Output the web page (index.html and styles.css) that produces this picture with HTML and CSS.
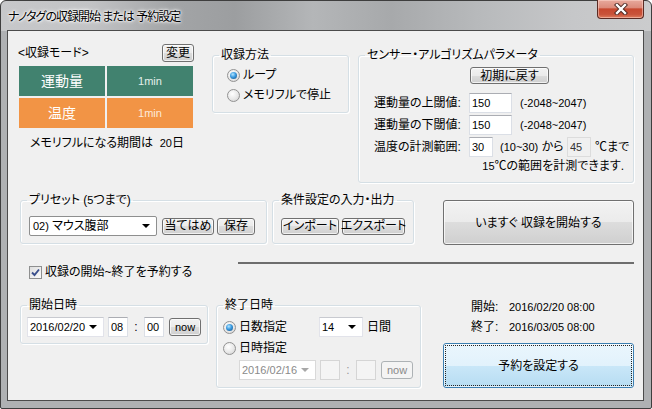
FILE: index.html
```html
<html>
  <head>
    <meta http-equiv="content-type" content="text/html;charset=UTF8">
    <link rel="stylesheet" href="styles.css">
    <title>ナノタグの収録開始 または 予約設定</title>
  </head>
  <body>
    <div class="window">
      <!-- title bar -->
      <div class="titlebar">
        <div class="title">ナノタグの収録開始 または 予約設定</div>
        <div class="close_btn">
          <svg width="14" height="12" viewBox="0 0 14 12">
            <path d="M3 2 L11 10 M11 2 L3 10" stroke="#4a2620" stroke-width="4.2" stroke-linecap="square" fill="none"/>
            <path d="M3 2 L11 10 M11 2 L3 10" stroke="#fff" stroke-width="2.4" stroke-linecap="square" fill="none"/>
          </svg>
        </div>
      </div>
      <div class="client">
        <!-- mode / method / sensor -->
        <div class="row row1">
          <div class="mode_panel">
            <div class="mode_head">
              <span>&lt;収録モード&gt;</span>
              <div class="btn btn_change">変更</div>
            </div>
            <div class="mode_grid">
              <div class="cell green big">運動量</div>
              <div class="cell green small">1min</div>
              <div class="cell orange big">温度</div>
              <div class="cell orange small">1min</div>
            </div>
            <div class="memory_full">メモリフルになる期間は&nbsp; <span class="num">20</span>日</div>
          </div>
          <fieldset class="group method_group">
            <legend>収録方法</legend>
            <div class="group_body">
              <div class="radio_row"><span class="radio checked"></span>ループ</div>
              <div class="radio_row"><span class="radio"></span>メモリフルで停止</div>
            </div>
          </fieldset>
          <fieldset class="group sensor_group">
            <legend>センサー・アルゴリズムパラメータ</legend>
            <div class="group_body">
              <div class="btn btn_reset">初期に戻す</div>
              <div class="param_row first">
                <span class="param_label">運動量の上閾値:</span>
                <input class="textbox tb_wide" type="text" value="150" readonly>
                <span class="num range">(-2048~2047)</span>
              </div>
              <div class="param_row">
                <span class="param_label">運動量の下閾値:</span>
                <input class="textbox tb_wide" type="text" value="150" readonly>
                <span class="num range">(-2048~2047)</span>
              </div>
              <div class="param_row">
                <span class="param_label">温度の計測範囲:</span>
                <input class="textbox tb_small" type="text" value="30" readonly>
                <span class="temp_from"><span class="num">(10~30)</span> から</span>
                <input class="textbox tb_small tb_gray" type="text" value="45" readonly>
                <span class="temp_unit">℃まで</span>
              </div>
              <div class="temp_note"><span class="num">15</span>℃の範囲を計測できます.</div>
            </div>
          </fieldset>
        </div>

        <!-- preset / io / start now -->
        <div class="row row2">
          <fieldset class="group preset_group">
            <legend>プリセット (<span class="num">5</span>つまで)</legend>
            <div class="group_body ctrl_row">
              <div class="combo combo_preset"><span><span class="num">02)</span> マウス腹部</span><span class="arrow"></span></div>
              <div class="btn btn_apply">当てはめ</div>
              <div class="btn btn_save">保存</div>
            </div>
          </fieldset>
          <fieldset class="group io_group">
            <legend>条件設定の入力・出力</legend>
            <div class="group_body ctrl_row">
              <div class="btn btn_import">インポート</div>
              <div class="btn btn_export">エクスポート</div>
            </div>
          </fieldset>
          <div class="btn big_btn btn_start">いますぐ 収録を開始する</div>
        </div>

        <div class="separator"></div>

        <div class="check_row">
          <span class="checkbox">
            <svg width="11" height="11" viewBox="0 0 11 11"><path d="M2 5.5 L4.5 8 L9 2.5" stroke="#3a4f8c" stroke-width="1.9" fill="none"/></svg>
          </span>
          収録の開始~終了を予約する
        </div>

        <!-- reservation -->
        <div class="row row4">
          <fieldset class="group start_group">
            <legend>開始日時</legend>
            <div class="group_body ctrl_row">
              <div class="combo combo_date"><span class="num">2016/02/20</span><span class="arrow"></span></div>
              <input class="textbox tb_time" type="text" value="08" readonly>
              <span class="colon">:</span>
              <input class="textbox tb_time" type="text" value="00" readonly>
              <div class="btn btn_now">now</div>
            </div>
          </fieldset>
          <fieldset class="group end_group">
            <legend>終了日時</legend>
            <div class="group_body">
              <div class="ctrl_row">
                <div class="radio_label"><span class="radio checked"></span>日数指定</div>
                <div class="combo combo_days"><span class="num">14</span><span class="arrow"></span></div>
                <span class="days_unit">日間</span>
              </div>
              <div class="ctrl_row row_gap">
                <div class="radio_label"><span class="radio"></span>日時指定</div>
              </div>
              <div class="ctrl_row disabled_row">
                <div class="combo combo_date disabled"><span class="num">2016/02/16</span><span class="arrow"></span></div>
                <input class="textbox tb_time disabled" type="text" value="" disabled>
                <span class="colon colon_disabled">:</span>
                <input class="textbox tb_time disabled" type="text" value="" disabled>
                <div class="btn btn_now btn_disabled">now</div>
              </div>
            </div>
          </fieldset>
          <div class="summary">
            <div class="summary_line"><span class="summary_label">開始:</span><span class="num">2016/02/20 08:00</span></div>
            <div class="summary_line"><span class="summary_label">終了:</span><span class="num">2016/03/05 08:00</span></div>
            <div class="btn big_btn btn_reserve">予約を設定する</div>
          </div>
        </div>
      </div>
    </div>
  </body>
</html>
```

FILE: styles.css
```css
body{
  margin: 0;
  font-family: "Liberation Sans", "Noto Sans CJK JP", sans-serif;
  font-size: 12px;
  line-height: 16px;
  font-feature-settings: "palt";
  color: #000;
}
.num{
  font-size: 11px;
}

/* window frame */
.window{
  width: 652px;
  height: 409px;
  box-sizing: border-box;
  border: 1px solid #3e3e3e;
  border-radius: 6px 6px 2px 2px;
  padding: 0 7px 7px 6px;
  display: flex;
  flex-direction: column;
  background:
    linear-gradient(90deg, #c7c8ca 0%, #c2c3c5 14%, #a3a5a7 26%, #9c9ea0 36%, #b4b6b8 48%, #a7a9ab 60%, #b8babc 74%, #c6c7c9 88%, #cbcccd 100%) top / 100% 30px no-repeat,
    #afb1b3;
}
.titlebar{
  height: 29px;
  display: flex;
  justify-content: space-between;
}
.title{
  align-self: center;
  margin-top: 2px;
  padding-left: 1px;
  letter-spacing: -1px;
  text-shadow: 0 0 5px #fff, 0 0 3px #fff, 0 0 2px #fff;
}
.close_btn{
  width: 47px;
  height: 19px;
  box-sizing: border-box;
  margin-top: -1px;
  border: 1px solid #5a2b24;
  border-top: none;
  border-radius: 0 0 4px 4px;
  background: linear-gradient(#e7a99c 0%, #dc8b7b 42%, #c7482f 50%, #c9533a 80%, #de7d5e 100%);
  box-shadow: inset 0 0 0 1px rgba(255,220,210,0.5);
  display: flex;
  align-items: center;
  justify-content: center;
}
.client{
  flex: 1;
  border: 1px solid #4b4b4b;
  background: #f0f0f0;
  padding: 13px 0 0 10px;
}

/* common controls */
.row{
  display: flex;
  align-items: flex-start;
}
.group{
  margin: 0;
  padding: 0;
  min-width: 0;
  box-sizing: border-box;
  border: 1px solid #d5dfe5;
  border-radius: 3px;
  box-shadow: inset 1px 1px 0 #fff, 1px 1px 0 #fff;
}
.group legend{
  margin-left: 6px;
  padding: 0 2px;
  line-height: 16px;
}
.btn{
  box-sizing: border-box;
  border: 1px solid #707070;
  border-radius: 3px;
  background: linear-gradient(#f2f2f2 0%, #ebebeb 50%, #dddddd 50%, #cfcfcf 100%);
  box-shadow: inset 0 0 0 1px rgba(255,255,255,0.7);
  display: flex;
  align-items: center;
  justify-content: center;
  white-space: nowrap;
}
.big_btn{
  width: 191px;
  height: 45px;
}
.btn_disabled{
  border-color: #adb2b5;
  background: #f4f4f4;
  color: #8a8a8a;
  box-shadow: none;
}
.textbox{
  box-sizing: border-box;
  height: 20px;
  margin: 0;
  padding: 0 2px;
  border: 1px solid #dbdfe6;
  border-top-color: #abadb3;
  background: #fff;
  font-family: "Liberation Sans", sans-serif;
  font-size: 11px;
  color: #000;
  outline: none;
}
.textbox.disabled{
  background: #f4f4f4;
  border-color: #d5d5d5;
}
.tb_gray{
  background: #f0f0f0;
  border-color: #dcdcdc;
  color: #333;
}
.combo{
  box-sizing: border-box;
  height: 20px;
  border: 1px solid #e2e3ea;
  border-top-color: #c8cad0;
  background: #fff;
  display: flex;
  align-items: center;
  justify-content: space-between;
  padding: 0 6px 0 2px;
}
.combo.disabled{
  color: #8a8a8a;
  border-color: #d9d9d9;
}
.arrow{
  width: 0;
  height: 0;
  border-left: 4px solid transparent;
  border-right: 4px solid transparent;
  border-top: 4px solid #000;
}
.combo.disabled .arrow{
  border-top-color: #a8a8a8;
}
.radio{
  position: relative;
  width: 13px;
  height: 13px;
  box-sizing: border-box;
  margin-right: 3px;
  border-radius: 50%;
  border: 1px solid #929292;
  background: radial-gradient(circle at 40% 35%, #ffffff 0%, #e8e8e8 55%, #cdcdcd 100%);
  flex: none;
}
.radio.checked::after{
  content: "";
  position: absolute;
  left: 2px;
  top: 2px;
  width: 7px;
  height: 7px;
  border-radius: 50%;
  background: radial-gradient(circle at 40% 35%, #b5e6ff 0%, #3a9ae0 45%, #134a7c 100%);
}
.ctrl_row{
  display: flex;
  align-items: center;
  height: 20px;
}

/* row 1 */
.mode_panel{
  width: 176px;
}
.mode_head{
  display: flex;
  justify-content: space-between;
  align-items: center;
  height: 18px;
}
.btn_change{
  width: 32px;
  height: 18px;
}
.mode_grid{
  margin: 4px 0 0 1px;
  display: grid;
  grid-template-columns: 86px 86px;
  grid-template-rows: 30px 30px;
  gap: 2px;
}
.cell{
  display: flex;
  align-items: center;
  justify-content: center;
  color: #fff;
}
.green{
  background: #41826f;
}
.orange{
  background: #f29445;
}
.big{
  font-size: 14px;
}
.small{
  font-size: 11px;
}
.green.small{
  color: #e4f0eb;
}
.orange.small{
  color: #fdeadb;
}
.memory_full{
  margin-top: 7px;
  padding-left: 12px;
}
.method_group{
  margin: 3px 0 0 18px;
  width: 137px;
  height: 66px;
  padding-top: 2px;
}
.method_group .group_body{
  padding-left: 14px;
}
.radio_row{
  display: flex;
  align-items: center;
  height: 20px;
}
.sensor_group{
  margin: 3px 0 0 9px;
  width: 276px;
  height: 136px;
  padding-top: 4px;
}
.sensor_group .group_body{
  padding-left: 15px;
}
.btn_reset{
  margin-left: 96px;
  width: 79px;
  height: 17px;
}
.param_row{
  display: flex;
  align-items: center;
  height: 20px;
  margin-top: 2px;
  white-space: nowrap;
}
.param_row.first{
  margin-top: 9px;
}
.param_label{
  width: 95px;
  flex: none;
}
.tb_wide{
  width: 43px;
}
.tb_small{
  width: 24px;
}
.range{
  margin-left: 8px;
}
.temp_from{
  width: 67px;
  margin-left: 7px;
  flex: none;
}
.temp_unit{
  margin-left: 4px;
}
.temp_note{
  margin-top: 1px;
  padding-right: 9px;
  text-align: right;
}

/* row 2 */
.row2{
  margin-top: 9px;
}
.preset_group{
  margin-left: 2px;
  width: 247px;
  height: 52px;
  padding-top: 8px;
}
.preset_group .group_body,
.io_group .group_body{
  padding-left: 8px;
}
.combo_preset{
  width: 128px;
  border: 1px solid #8e8f8f;
  border-radius: 2px;
  padding-left: 3px;
}
.btn_apply{
  margin-left: 5px;
  width: 52px;
  height: 17px;
}
.btn_save{
  margin-left: 3px;
  width: 38px;
  height: 17px;
}
.io_group{
  margin-left: 5px;
  width: 142px;
  height: 52px;
  padding-top: 8px;
}
.btn_import{
  width: 58px;
  height: 17px;
}
.btn_export{
  margin-left: 3px;
  width: 63px;
  height: 17px;
}
.btn_start{
  margin: 8px 0 0 29px;
}
.separator{
  margin: 17px 0 0 220px;
  width: 396px;
  height: 2px;
  background: #6d6d6d;
}
.check_row{
  display: flex;
  align-items: center;
  height: 16px;
  padding-left: 11px;
}
.checkbox{
  width: 13px;
  height: 13px;
  box-sizing: border-box;
  margin-right: 3px;
  border: 1px solid #8e8f8f;
  background: linear-gradient(135deg, #dedede, #fbfbfb);
  display: flex;
  align-items: center;
  justify-content: center;
}

/* row 4 */
.row4{
  margin-top: 17px;
}
.start_group{
  margin-left: 2px;
  width: 188px;
  height: 47px;
  padding-top: 4px;
}
.start_group .group_body,
.end_group .group_body{
  padding-left: 6px;
}
.combo_date{
  width: 77px;
}
.tb_time{
  width: 20px;
  margin-left: 4px;
}
.colon{
  width: 16px;
  text-align: center;
  margin-right: -4px;
}
.colon_disabled{
  color: #9a9a9a;
}
.btn_now{
  margin-left: 5px;
  width: 32px;
  height: 18px;
  font-size: 11px;
}
.end_group{
  margin-left: 8px;
  width: 205px;
  height: 91px;
  padding-top: 4px;
}
.radio_label{
  display: flex;
  align-items: center;
  width: 96px;
}
.combo_days{
  width: 44px;
}
.days_unit{
  margin-left: 4px;
}
.row_gap{
  margin-top: 1px;
}
.disabled_row{
  margin-top: 2px;
  padding-left: 16px;
}
.summary{
  margin-left: 22px;
  width: 191px;
}
.summary_line{
  height: 20px;
  display: flex;
  align-items: center;
  padding-left: 28px;
}
.summary_label{
  width: 38px;
}
.btn_reserve{
  margin-top: 6px;
  border-color: #3c7fb1;
  background: linear-gradient(#eaf6fd 0%, #e2f2fc 50%, #c9e7f8 52%, #b6dcf2 100%);
  box-shadow: inset 0 0 0 1px rgba(255,255,255,0.6);
  outline: 1px dotted #222;
  outline-offset: -3px;
}
```
